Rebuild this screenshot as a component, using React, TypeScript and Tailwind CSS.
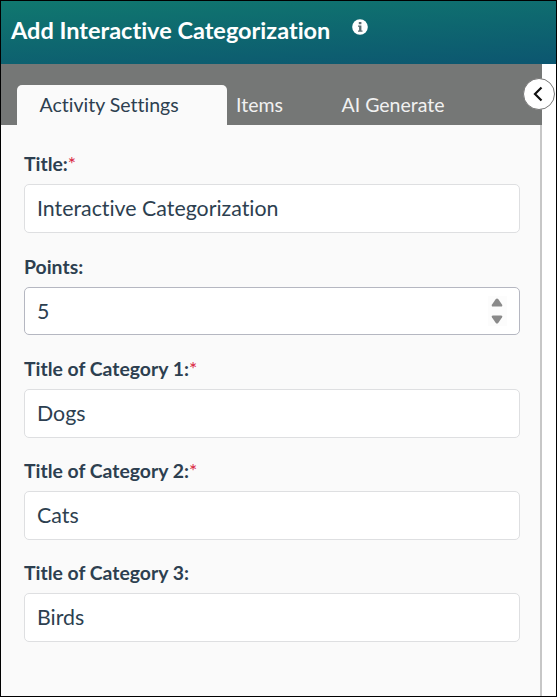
import { useState } from 'react';

const TABS = ['Activity Settings', 'Items', 'AI Generate'];
const TAB_CLASSES = ['w-[210px] pl-[22.5px] text-left', 'w-[105px] ml-[-20px]', 'w-[150px] ml-[6px]'];

const labelClass = 'flex h-[33px] items-start text-[19.4px] font-bold leading-[26px] whitespace-nowrap';
const inputClass =
  'block h-[49px] w-full rounded-[5px] border border-[#dedfe1] bg-white px-3 pb-[2px] text-[21.35px] text-[#2d3f50] outline-none';

function FieldLabel({ id, text, required }: { id: string; text: string; required?: boolean }) {
  return (
    <label htmlFor={id} className={labelClass}>
      {text}
      {required && <span className="font-normal text-[#d9263f]">*</span>}
    </label>
  );
}

function CategoryField({ index, value, required }: { index: number; value: string; required?: boolean }) {
  const id = `category-${index}`;
  return (
    <div>
      <FieldLabel id={id} text={`Title of Category ${index}:`} required={required} />
      <input id={id} type="text" defaultValue={value} className={inputClass} />
    </div>
  );
}

export default function App() {
  const [activeTab, setActiveTab] = useState('Activity Settings');
  const [points, setPoints] = useState(5);

  return (
    <div className="flex h-[697px] w-[557px] flex-col overflow-hidden border border-black bg-white font-['Lato',sans-serif] text-[#2d3f50] [font-variant-ligatures:none]">
      {/* Header */}
      <header className="flex h-[63px] shrink-0 items-start bg-linear-[177deg] from-[#10786f] to-[#0c5670] pl-[10px] text-white">
        <h1 className="w-[320px] pt-[13px] text-[23.5px] font-bold leading-8 whitespace-nowrap">
          Add Interactive Categorization
        </h1>
        <svg viewBox="0 0 16 16" className="mt-[18px] ml-[21px] h-4 w-4 shrink-0">
          <circle cx="8" cy="8" r="7.8" fill="white" />
          <path d="M6.8 2.9h2.6v2.3H6.8zM6 6.5h3.4v5h1.1v1.2H6v-1.2h1.1V7.7H6z" fill="#596b70" />
        </svg>
      </header>

      <div className="flex min-h-0 flex-1">
        <div className="relative flex w-[541px] flex-col">
          {/* Tabs */}
          <nav className="flex h-[61px] shrink-0 items-end bg-[#757776] pl-4">
            {TABS.map((tab, i) => (
              <button
                key={tab}
                type="button"
                onClick={() => setActiveTab(tab)}
                className={`${TAB_CLASSES[i]} h-10 rounded-t-[5px] text-[19.5px] whitespace-nowrap ${
                  activeTab === tab ? 'bg-[#fafafa] text-[#2d3f50]' : 'text-[#f1f1f1]'
                }`}
              >
                {tab}
              </button>
            ))}
          </nav>

          {/* Settings form */}
          <form className="flex flex-1 flex-col gap-5 border-r-2 border-[#c7c7c7] bg-[#fafafa] pt-[26px] pr-5 pl-[23px]">
            <div>
              <FieldLabel id="title" text="Title:" required />
              <input id="title" type="text" defaultValue="Interactive Categorization" className={inputClass} />
            </div>
            <div className="pt-px pb-px">
              <FieldLabel id="points" text="Points:" />
              <div className="flex h-12 w-full items-center rounded-[5px] border border-[#b5b7c1] bg-white pr-[12.5px]">
                <input
                  id="points"
                  type="text"
                  value={points}
                  onChange={(e) => setPoints(Number(e.target.value) || 0)}
                  className="h-full min-w-0 flex-1 bg-transparent px-3 text-[21.35px] outline-none"
                />
                <div className="flex h-[30px] w-[19px] flex-col items-center justify-between bg-[#fcfcfc] py-[2px]">
                  <button type="button" aria-label="Increase" onClick={() => setPoints(points + 1)}>
                    <svg viewBox="0 0 12 9" className="block h-[9px] w-3">
                      <path d="M4.8 1Q6 0 7.2 1L11 6.5Q12 8.5 10 8.5H2Q0 8.5 1 6.5Z" fill="#8a8a8a" />
                    </svg>
                  </button>
                  <button type="button" aria-label="Decrease" onClick={() => setPoints(points - 1)}>
                    <svg viewBox="0 0 12 9" className="block h-[9px] w-3 rotate-180">
                      <path d="M4.8 1Q6 0 7.2 1L11 6.5Q12 8.5 10 8.5H2Q0 8.5 1 6.5Z" fill="#8a8a8a" />
                    </svg>
                  </button>
                </div>
              </div>
            </div>
            <CategoryField index={1} value="Dogs" required />
            <CategoryField index={2} value="Cats" required />
            <CategoryField index={3} value="Birds" />
          </form>

          {/* Collapse button sits over the panel edge */}
          <button
            type="button"
            aria-label="Collapse panel"
            className="absolute top-[14px] right-[-13px] flex h-8 w-8 items-center justify-center rounded-full border border-[#777] bg-white"
          >
            <svg viewBox="0 0 10 16" className="mr-[2px] h-4 w-[10px]" fill="none" stroke="#111" strokeWidth="2.2">
              <path d="M8.5 1.5L2 8l6.5 6.5" />
            </svg>
          </button>
        </div>
      </div>
    </div>
  );
}
